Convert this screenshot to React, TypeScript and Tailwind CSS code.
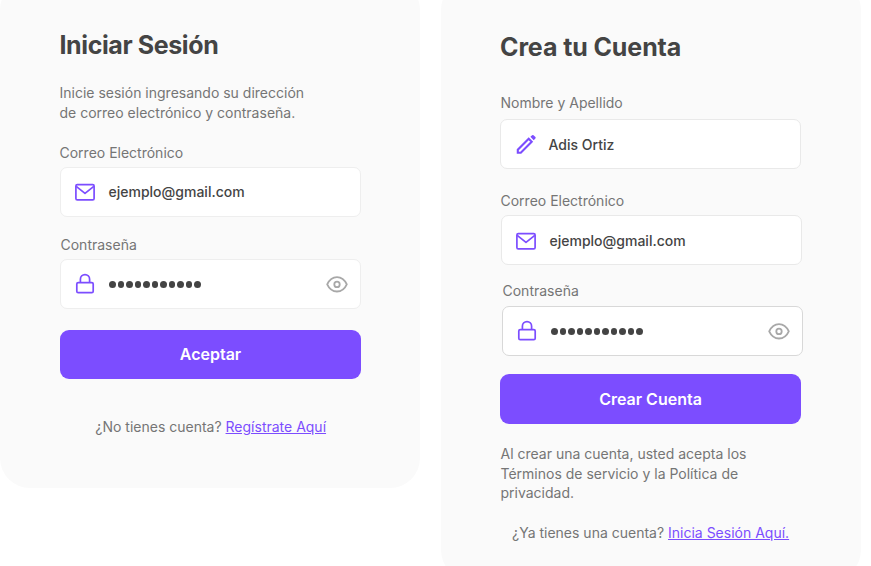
import type { ReactNode } from "react";

function MailIcon() {
  return (
    <svg className="h-6 w-6 shrink-0 text-[#7c4dff]" viewBox="0 0 24 24" fill="none" stroke="currentColor" strokeWidth="1.7" strokeLinejoin="round">
      <rect x="2.9" y="4.7" width="18.2" height="15.2" rx="1.4" />
      <path d="M3.2 6.4 12 13.4l8.8-7" />
    </svg>
  );
}

function LockIcon() {
  return (
    <svg className="h-6 w-6 shrink-0 text-[#7c4dff]" viewBox="0 0 24 24" fill="none" stroke="currentColor" strokeWidth="1.7">
      <rect x="3.8" y="10.6" width="16.4" height="10" rx="1.4" />
      <path d="M7.4 10.6V7.2a4.6 4.6 0 0 1 9.2 0v3.4" />
    </svg>
  );
}

function PencilIcon() {
  return (
    <svg className="h-6 w-6 shrink-0 text-[#7c4dff]" viewBox="0 0 24 24" fill="none" stroke="currentColor">
      <path strokeWidth="2.1" strokeLinejoin="miter" d="M4.8 19.7v-3L15.7 5.8l3 3L7.8 19.7z" />
      <path fill="currentColor" stroke="none" d="M17.4 3.8l1.7-1.6q.7-.6 1.4 0l1.9 1.9q.7.7 0 1.4l-1.7 1.7z" />
    </svg>
  );
}

function EyeIcon() {
  return (
    <svg className="h-6 w-6 shrink-0 text-[#a8a8a8]" viewBox="0 0 24 24" fill="none" stroke="currentColor" strokeWidth="1.8">
      <path d="M2.2 12.4C4.4 7.6 7.8 5.1 12 5.1s7.6 2.5 9.8 7.3c-2.2 4.8-5.6 7.1-9.8 7.1s-7.6-2.3-9.8-7.1z" strokeLinejoin="round" />
      <circle cx="12" cy="12.4" r="2.7" />
    </svg>
  );
}

function Field({ icon, className, children, end }: { icon: ReactNode; className: string; children: ReactNode; end?: ReactNode }) {
  return (
    <div className={`flex w-[301px] items-center rounded-[7px] border bg-white pr-[11px] pl-[12px] ${className}`}>
      {icon}
      <span className="ml-[11.5px] flex flex-1 items-center text-[14px] leading-5 font-medium text-[#444]">{children}</span>
      {end}
    </div>
  );
}

function PasswordDots() {
  return (
    <span className="flex gap-[2px] pt-px pl-[0.5px]">
      {Array.from({ length: 11 }, (_, i) => (
        <span key={i} className="h-[6.5px] w-[6.5px] rounded-full bg-[#444]" />
      ))}
    </span>
  );
}

export default function App() {
  return (
    <main className="flex h-[566px] w-[871px] gap-5 overflow-hidden bg-white font-['Inter',sans-serif] text-[14px] leading-5 text-[#757575]">
      <section className="-mt-5 flex h-[508px] w-[420px] flex-col items-start rounded-[30px] bg-[#fafafa] pt-[49px] pl-[60px]">
        <h1 className="-ml-[0.5px] h-8 text-[25px] leading-8 font-bold tracking-[-0.4px] text-[#444]">Iniciar Sesión</h1>
        <p className="mt-[22px] -ml-[0.5px]">
          Inicie sesión ingresando su dirección
          <br />
          de correo electrónico y contraseña.
        </p>
        <label className="mt-5 -ml-[0.5px]">Correo Electrónico</label>
        <Field className="mt-[4px] h-[50px] border-[#eeeeee]" icon={<MailIcon />}>ejemplo@gmail.com</Field>
        <label className="mt-[18px] ml-[0.5px]">Contraseña</label>
        <Field className="mt-[4px] h-[50px] border-[#eeeeee]" icon={<LockIcon />} end={<EyeIcon />}>
          <PasswordDots />
        </Field>
        <button className="mt-[20.5px] h-[49px] w-[301px] rounded-[9px] bg-[#7c4dff] text-[16px] font-semibold text-white">Aceptar</button>
        <p className="mt-[38.5px] ml-[35.3px] whitespace-nowrap">
          ¿No tienes cuenta? <a className="text-[#7c4dff] underline">Regístrate Aquí</a>
        </p>
      </section>

      <section className="-mt-5 ml-[0.5px] flex h-[600px] w-[420px] flex-col items-start rounded-[30px] bg-[#fafafa] pt-[51px] pl-[59.5px]">
        <h1 className="h-8 text-[25px] leading-8 font-bold tracking-[-0.1px] text-[#444]">Crea tu Cuenta</h1>
        <label className="mt-[30px] ml-[0.5px]">Nombre y Apellido</label>
        <Field className="mt-[6px] h-[50px] border-[#e9e9e9] pt-px" icon={<PencilIcon />}>Adis Ortiz</Field>
        <label className="mt-[22px] ml-[0.5px]">Correo Electrónico</label>
        <Field className="mt-[4px] ml-px h-[50px] border-[#e9e9e9] pt-px" icon={<MailIcon />}>ejemplo@gmail.com</Field>
        <label className="mt-[16px] ml-[2.5px]">Contraseña</label>
        <Field className="mt-[5px] ml-[2px] h-[50px] border-[#d8d8d8]" icon={<LockIcon />} end={<EyeIcon />}>
          <PasswordDots />
        </Field>
        <button className="mt-[18px] h-[50px] w-[301px] rounded-[9px] bg-[#7c4dff] text-[16px] font-semibold text-white">Crear Cuenta</button>
        <p className="mt-[20px] ml-[0.5px] leading-[19.6px]">
          Al crear una cuenta, usted acepta los
          <br />
          Términos de servicio y la Política de
          <br />
          privacidad.
        </p>
        <p className="mt-[20px] ml-[12px] whitespace-nowrap">
          ¿Ya tienes una cuenta? <a className="text-[#7c4dff] underline">Inicia Sesión Aquí.</a>
        </p>
      </section>
    </main>
  );
}
